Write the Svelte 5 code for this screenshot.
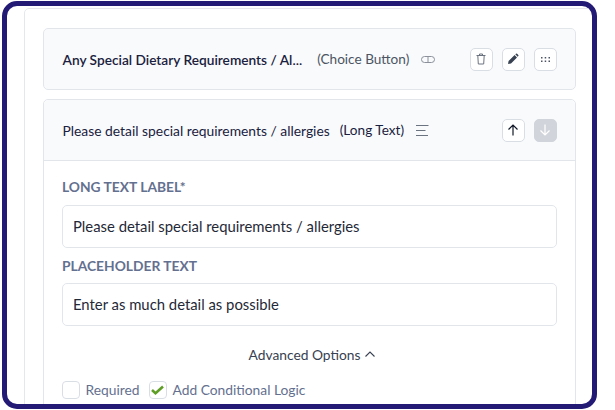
<script>
	let required = false;
	let conditional = true;
</script>

<div class="frame">
	<div class="panel">
		<div class="card collapsed">
			<div class="card-head">
				<span class="title strong">Any Special Dietary Requirements / Al...</span>
				<span class="kind">(Choice Button)</span>
				<svg class="type-icon" width="14" height="7" viewBox="0 0 14 7" fill="none" stroke="#8b909a" stroke-width="1">
					<rect x="0.5" y="0.5" width="13" height="6" rx="3" />
					<path d="M7 .5v6" />
				</svg>
				<div class="actions">
					<button class="icon-btn" aria-label="Delete">
						<svg width="12" height="12" viewBox="0 0 12 12" fill="none" stroke="#6b7280" stroke-width="1">
							<path d="M1.5 2.5h9M4.500 2.500V1h3v1.500M2.800 2.500l.5 8.500h5.400l.5-8.500" />
						</svg>
					</button>
					<button class="icon-btn" aria-label="Edit">
						<svg width="12" height="12" viewBox="0 0 12 12" fill="#374151">
							<path d="M1 11l.6-3L7.600 2l2.400 2.400-6 6zM8.300 1.300l.7-.6a.8.8 0 0 1 1.100 0l1.200 1.200a.8.8 0 0 1 0 1.100l-.6.7z" />
						</svg>
					</button>
					<button class="icon-btn" aria-label="Move">
						<svg width="9" height="5" viewBox="0 0 9 5" fill="#4b5563">
							<rect x="0" y="0" width="1.500" height="1.500" /><rect x="3.700" y="0" width="1.500" height="1.500" /><rect x="7.500" y="0" width="1.500" height="1.500" />
							<rect x="0" y="3.500" width="1.500" height="1.500" /><rect x="3.700" y="3.500" width="1.500" height="1.500" /><rect x="7.500" y="3.500" width="1.500" height="1.500" />
						</svg>
					</button>
				</div>
			</div>
		</div>

		<div class="card open">
			<div class="card-head">
				<span class="title">Please detail special requirements / allergies</span>
				<span class="kind">(Long Text)</span>
				<svg class="type-icon" width="13" height="11" viewBox="0 0 13 11" fill="none" stroke="#6b7280" stroke-width="1">
					<path d="M0 .5h12.500M0 5.500h9.500M0 10.500h12" />
				</svg>
				<div class="actions">
					<button class="icon-btn" aria-label="Up">
						<svg width="12" height="12" viewBox="0 0 12 12" fill="none" stroke="#111827" stroke-width="1.200">
							<path d="M6 11.500V1M1.500 5.500L6 1l4.500 4.500" />
						</svg>
					</button>
					<button class="icon-btn disabled" aria-label="Down">
						<svg width="12" height="12" viewBox="0 0 12 12" fill="none" stroke="#fff" stroke-width="1.200">
							<path d="M6 .5V11M1.500 6.500L6 11l4.500-4.500" />
						</svg>
					</button>
				</div>
			</div>

			<div class="card-body">
				<label class="field-label" for="label-input">LONG TEXT LABEL*</label>
				<input id="label-input" value="Please detail special requirements / allergies" />
				<label class="field-label" for="placeholder-input">PLACEHOLDER TEXT</label>
				<input id="placeholder-input" value="Enter as much detail as possible" />

				<div class="advanced">
					Advanced Options
					<svg width="10" height="6" viewBox="0 0 10 6" fill="none" stroke="#374151" stroke-width="1.100">
						<path d="M.5 5.500L5 1l4.500 4.500" />
					</svg>
				</div>

				<div class="checks">
					<span class="check">
						<span class="box">
							{#if required}✓{/if}
						</span>
						Required
					</span>
					<span class="check">
						<span class="box">
							{#if conditional}
								<svg width="13" height="10" viewBox="0 0 13 10" fill="none" stroke="#5f9e26" stroke-width="2.600">
									<path d="M1 5l3.500 3.200L12 1.500" />
								</svg>
							{/if}
						</span>
						Add Conditional Logic
					</span>
				</div>
			</div>
		</div>
	</div>
</div>

<style>
	:global(body) {
		background: #fff;
		font-family: Lato, "Liberation Sans", sans-serif;
	}

	.frame {
		box-sizing: border-box;
		width: 595px;
		height: 408px;
		margin: 1px 0 0 1.5px;
		border: 5px solid #231a75;
		border-radius: 15px;
		overflow: hidden;
		padding: 2px 0 0 17px;
		background: #fff;
	}

	.panel {
		box-sizing: border-box;
		height: 420px;
		width: 600px;
		padding: 19px 0 0 18px;
		border: 1.5px solid #e5e7eb;
		border-radius: 5px;
	}

	.card {
		width: 533px;
		box-sizing: border-box;
		border: 1px solid #e2e5ea;
		border-radius: 5px;
		background: #f9fafb;
	}

	.collapsed {
		height: 62px;
		margin-bottom: 9px;
	}

	.open {
		height: 340px;
		background: #fff;
	}

	.card-head {
		display: flex;
		align-items: center;
		height: 60px;
		padding: 0 18px 0 19px;
		font-size: 13.850px;
		color: #1a2140;
	}

	.open .card-head {
		background: #f9fafb;
		border-bottom: 1px solid #e2e5ea;
		border-radius: 5px 5px 0 0;
	}

	.strong {
		font-weight: 600;
		font-size: 13.700px;
	}

	.kind {
		margin-left: 15px;
		font-size: 13.600px;
		color: #4b5563;
	}

	.open .kind {
		margin-left: 10px;
		color: #1a2140;
	}

	.type-icon {
		margin-left: 12px;
	}

	.actions {
		display: flex;
		gap: 9px;
		margin-left: auto;
	}

	.icon-btn {
		display: flex;
		align-items: center;
		justify-content: center;
		box-sizing: border-box;
		width: 23px;
		height: 23px;
		padding: 0;
		border: 1px solid #d9dde4;
		border-radius: 5px;
		background: #fff;
	}

	.icon-btn.disabled {
		background: #d1d5db;
		border-color: #d1d5db;
	}

	.card-body {
		padding: 16.500px 18.500px 0;
	}

	.field-label {
		display: block;
		font-size: 13.800px;
		font-weight: 700;
		line-height: 17px;
		color: #64708f;
		margin-bottom: 9px;
	}

	.field-label:first-child {
		margin-bottom: 10px;
	}

	input {
		display: block;
		box-sizing: border-box;
		width: 495px;
		height: 43px;
		padding: 0 10px;
		margin-bottom: 9px;
		border: 1px solid #e2e5ea;
		border-radius: 5px;
		font: 14.850px Lato, "Liberation Sans", sans-serif;
		color: #1f2937;
		background: #fff;
		outline: none;
	}

	.advanced {
		display: flex;
		align-items: center;
		justify-content: center;
		gap: 4px;
		margin-top: 20px;
		padding-left: 5px;
		font-size: 13.800px;
		line-height: 17px;
		color: #374151;
	}

	.checks {
		display: flex;
		gap: 9.500px;
		margin-top: 18px;
	}

	.check {
		display: flex;
		align-items: center;
		gap: 5.500px;
		font-size: 13.800px;
		color: #64708f;
	}

	.box {
		display: flex;
		align-items: center;
		justify-content: center;
		box-sizing: border-box;
		width: 18px;
		height: 18px;
		border: 1px solid #d9dde4;
		border-radius: 4px;
		background: #fff;
	}
</style>
